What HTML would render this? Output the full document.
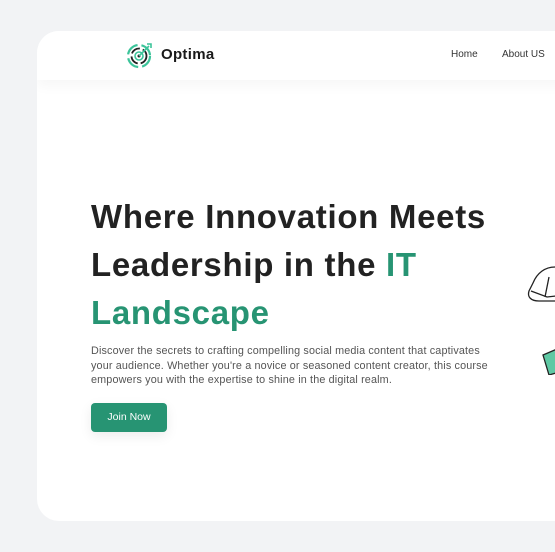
<!DOCTYPE html>
<html><head><meta charset="utf-8"><style>
html,body{margin:0;padding:0;width:555px;height:552px;overflow:hidden;background:#f2f3f5;font-family:"Liberation Sans",sans-serif}
.card{position:absolute;left:37px;top:31px;width:560px;height:490px;background:#fff;border-radius:22px;overflow:hidden}
.hdr{position:absolute;left:0;top:0;right:0;height:49px;background:#fff;box-shadow:0 6px 12px rgba(0,0,0,0.035)}
.logo{position:absolute;left:89px;top:10px}
.brand{position:absolute;left:124px;top:15px;font-size:15px;font-weight:bold;color:#1a1a1a;letter-spacing:0.3px}
.nav{position:absolute;top:18px;font-size:10px;color:#333}
h1{position:absolute;left:54px;top:162px;margin:0;font-size:33px;line-height:48px;font-weight:bold;color:#222;letter-spacing:0.7px;width:470px}
h1 span{color:#279473}
p{position:absolute;left:54px;top:313px;margin:0;width:402px;font-size:10.8px;line-height:14.6px;color:#555;letter-spacing:0.15px}
.btn{position:absolute;left:54px;top:372px;width:76px;height:29px;background:#279473;border-radius:4px;color:#fff;font-size:10.5px;text-align:center;line-height:29px;box-shadow:0 4px 12px rgba(0,0,0,0.08)}
</style></head><body>
<div class="card">
<div class="hdr">
<svg class="logo" width="28" height="28" viewBox="0 0 28 28" fill="none">
<circle cx="13" cy="15" r="11" stroke="#3cc49a" stroke-width="2.2" stroke-dasharray="14 4"/>
<circle cx="13" cy="15" r="7.5" stroke="#222" stroke-width="1.8" stroke-dasharray="10 3"/>
<circle cx="13" cy="15" r="4" stroke="#3cc49a" stroke-width="1.6"/>
<circle cx="13" cy="15" r="1.5" fill="#222"/>
<path d="M13 15 L23 5" stroke="#3cc49a" stroke-width="1.6"/>
<path d="M21 3 L25 3 L25 7" stroke="#3cc49a" stroke-width="1.6"/>
</svg>
<div class="brand">Optima</div>
<div class="nav" style="left:414px">Home</div>
<div class="nav" style="left:465px">About US</div>
</div>
<h1>Where Innovation Meets Leadership in the <span>IT Landscape</span></h1>
<p>Discover the secrets to crafting compelling social media content that captivates your audience. Whether you're a novice or seasoned content creator, this course empowers you with the expertise to shine in the digital realm.</p>
<div class="btn">Join Now</div>
<svg style="position:absolute;left:488px;top:234px" width="40" height="110" viewBox="0 0 40 110" fill="none" stroke="#222" stroke-width="1.3">
<path d="M30 2 C20 2 12 8 8 18 L4 26 C2 32 6 36 14 36 L40 36"/>
<path d="M6 26 L22 32 L40 30"/>
<path d="M24 12 L20 32"/>
<path d="M18 90 L32 84 L38 106 L24 110 Z" fill="#5fc9a4"/>
</svg>
</div>
</body></html>
